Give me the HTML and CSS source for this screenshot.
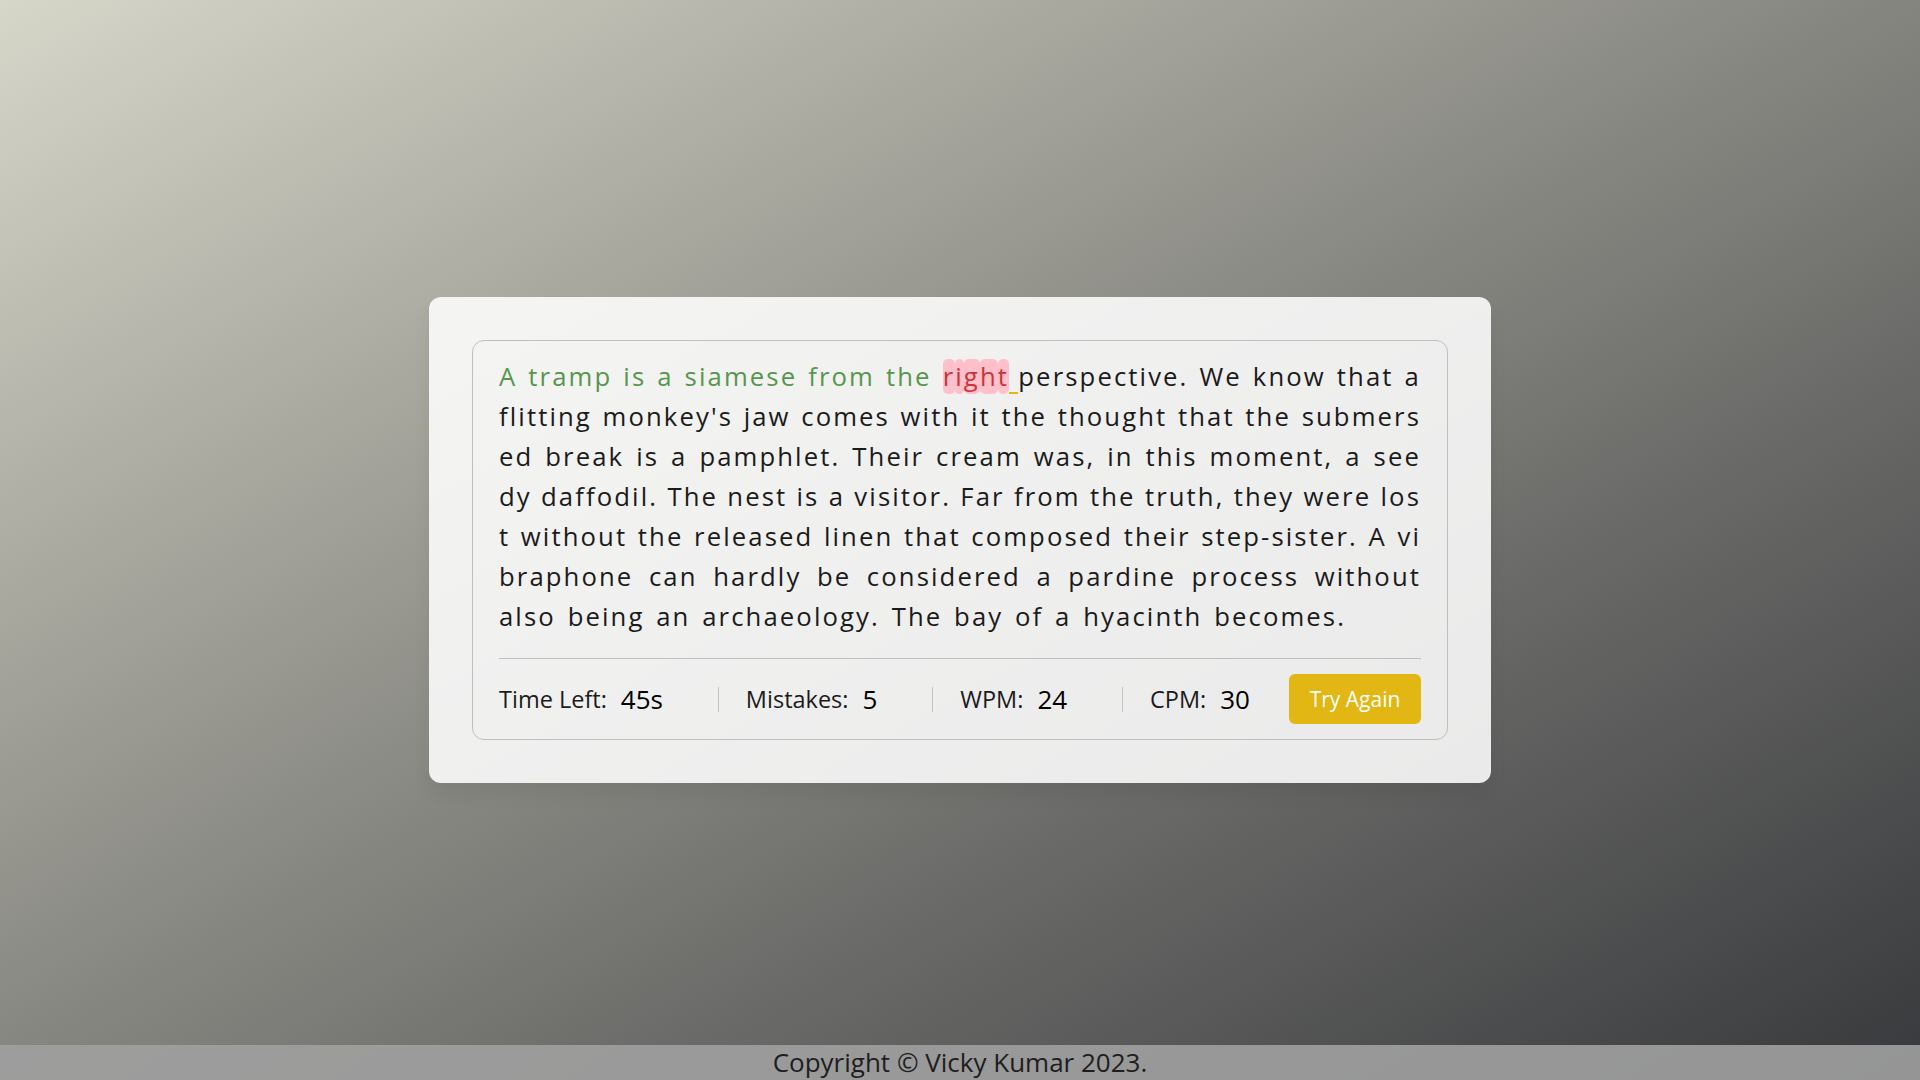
FILE: index.html
```html
<!DOCTYPE html>
<html lang="en">
<head>
<meta charset="utf-8">
<title>Typing Speed Test</title>
<link rel="stylesheet" href="styles.css">
</head>
<body>
<main class="stage">
  <div class="wrapper">
    <div class="content-box">
      <div class="typing-text">
        <p class="line"><span class="correct">A tramp is a siamese from the </span><span class="bad">r</span><span class="bad">i</span><span class="bad">g</span><span class="bad">h</span><span class="bad">t</span><span class="active"> </span>perspective. We know that a</p>
        <p class="line">flitting monkey's jaw comes with it the thought that the submers</p>
        <p class="line">ed break is a pamphlet. Their cream was, in this moment, a see</p>
        <p class="line">dy daffodil. The nest is a visitor. Far from the truth, they were los</p>
        <p class="line">t without the released linen that composed their step-sister. A vi</p>
        <p class="line">braphone can hardly be considered a pardine process without</p>
        <p class="line last">also being an archaeology. The bay of a hyacinth becomes.</p>
      </div>
      <div class="content">
        <ul class="result-details">
          <li><p>Time Left:</p><span>45s</span></li>
          <li><p>Mistakes:</p><span>5</span></li>
          <li><p>WPM:</p><span>24</span></li>
          <li><p>CPM:</p><span>30</span></li>
        </ul>
        <button class="btn">Try Again</button>
      </div>
    </div>
  </div>
</main>
<footer class="footer">Copyright © Vicky Kumar 2023.</footer>
</body>
</html>
```
FILE: styles.css
```css
* {
  box-sizing: border-box;
  margin: 0;
  padding: 0;
}
html, body {
  height: 100%;
}
body {
  font-family: "Open Sans", "Noto Sans", sans-serif;
  background: linear-gradient(to bottom right, #d6d6c9 0%, #9d9d95 35%, #6c6c6a 65%, #38393c 100%);
  color: #1b1b1b;
  overflow: hidden;
}
.stage {
  height: 100vh;
  display: flex;
  align-items: center;
  justify-content: center;
}
.wrapper {
  width: 1062px;
  padding: 43px;
  background: rgba(255, 255, 255, 0.87);
  border-radius: 12px;
  box-shadow: 0 12px 18px rgba(0, 0, 0, 0.06);
}
.content-box {
  padding: 16px 26px 0;
  border-radius: 12px;
  border: 1px solid #bfbfbf;
}
.typing-text .line {
  font-size: 25.7px;
  line-height: 40px;
  letter-spacing: 2.1px;
  text-align: justify;
  text-align-last: justify;
  white-space: nowrap;
  color: #1b1b1b;
}
.typing-text .line.last {
  text-align-last: left;
  word-spacing: 3px;
}
.correct {
  color: #56964f;
}
.bad {
  color: #cb3439;
  background: #ffc0cb;
  border-radius: 5px;
}
.active {
  position: relative;
  display: inline-block;
  width: 0.36em;
  border-bottom: 2px solid #e2b714;
  line-height: 1;
  height: 1.3em;
  vertical-align: -0.32em;
}
.content {
  margin-top: 21px;
  padding: 15px 0;
  display: flex;
  align-items: center;
  justify-content: space-between;
  border-top: 1px solid #bfbfbf;
}
.result-details {
  list-style: none;
  display: flex;
  align-items: center;
  justify-content: space-between;
  width: calc(100% - 171px);
}
.result-details li {
  display: flex;
  align-items: center;
  height: 25px;
}
.result-details li:not(:first-child) {
  padding-left: 27px;
  border-left: 1px solid #c4c4c4;
}
.result-details li p {
  font-size: 23.5px;
  color: #1b1b1b;
}
.result-details li span {
  font-size: 26px;
  font-weight: 500;
  margin-left: 14px;
  color: #000;
}
.btn {
  width: 132px;
  height: 50px;
  border: none;
  border-radius: 6px;
  background: #e2b714;
  color: #fff;
  font-family: "Open Sans", sans-serif;
  font-size: 21px;
  cursor: pointer;
}
.footer {
  position: relative;
  margin-top: -35px;
  height: 35px;
  background: rgba(160, 160, 160, 0.9);
  text-align: center;
  font-size: 26px;
  line-height: 34px;
  font-weight: 500;
  color: #1e1e1e;
}
```
